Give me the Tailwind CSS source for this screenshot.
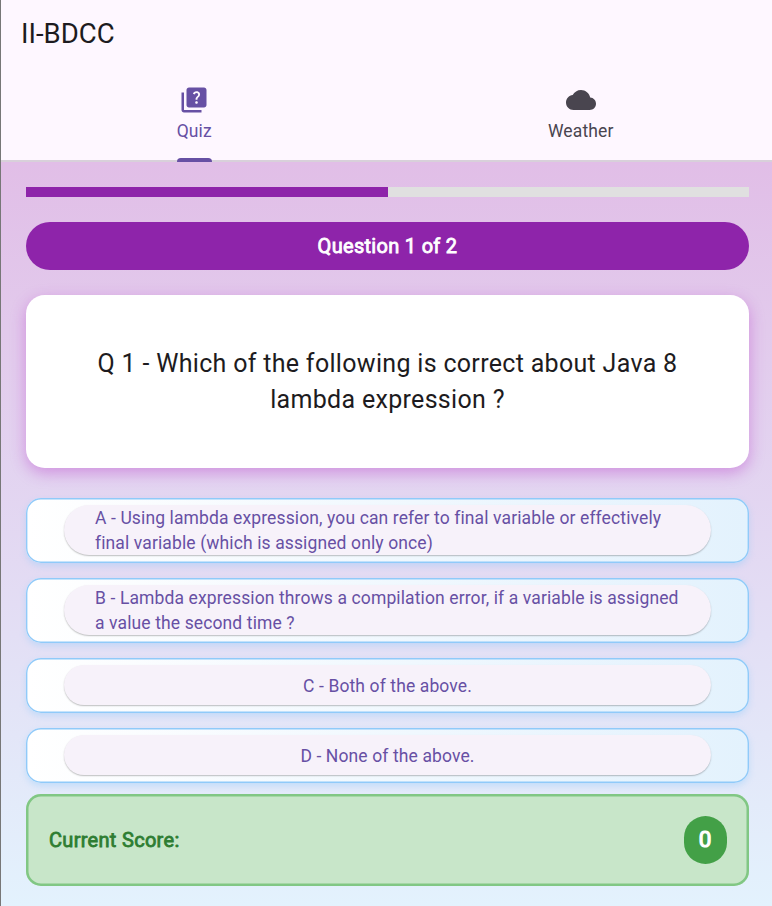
<!DOCTYPE html>
<html lang="en">
<head>
<meta charset="utf-8">
<title>II-BDCC</title>
<script src="https://cdn.jsdelivr.net/npm/@tailwindcss/browser@4"></script>
</head>
<body class="h-[906px] overflow-hidden bg-[#777777] pl-px font-[Roboto,sans-serif]">
<div class="flex h-[906px] w-[773px] flex-col">
  <header class="flex h-[162px] shrink-0 flex-col border-b-2 border-[#d8d0da] bg-[#fef7ff]">
    <h1 class="h-[68px] pl-5 text-[27.5px] leading-[67px] text-[#1d1b20]">II-BDCC</h1>
    <nav class="grid h-[94px] grid-cols-2 text-[17.5px] leading-[25px] tracking-[0.125px]">
      <a class="flex flex-col items-center pt-[18px] text-[#6750a4]">
        <svg class="size-[30px]" viewBox="0 0 24 24" fill="currentColor"><path d="M4 6H2v14c0 1.100.9 2 2 2h14v-2H4V6zm16-4H8c-1.100 0-2 .9-2 2v12c0 1.100.9 2 2 2h12c1.100 0 2-.9 2-2V4c0-1.100-.9-2-2-2zm-5.990 13c-.59 0-1.050-.47-1.050-1.050 0-.59.47-1.040 1.050-1.040.59 0 1.040.45 1.040 1.040-.01.58-.45 1.050-1.040 1.050zm2.500-6.170c-.63.930-1.230 1.210-1.560 1.810-.13.240-.18.400-.18 1.180h-1.520c0-.41-.06-1.080.26-1.650.410-.73 1.180-1.160 1.630-1.800.480-.68.210-1.940-1.140-1.940-.88 0-1.320.67-1.500 1.230l-1.370-.57C11.510 5.960 12.520 5 13.990 5c1.230 0 2.080.56 2.510 1.260.370.600.580 1.730.010 2.570z"/></svg>
        <span class="mt-[4px]">Quiz</span>
        <span class="relative z-10 mt-[14px] h-[4px] w-[35px] rounded-t-[3.75px] bg-[#6750a4]"></span>
      </a>
      <a class="flex flex-col items-center pt-[18px] text-[#49454f]">
        <svg class="size-[30px]" viewBox="0 0 24 24" fill="currentColor"><path d="M19.350 10.040C18.670 6.590 15.640 4 12 4 9.110 4 6.600 5.640 5.350 8.040 2.340 8.360 0 10.910 0 14c0 3.310 2.690 6 6 6h13c2.760 0 5-2.240 5-5 0-2.640-2.050-4.780-4.650-4.960z"/></svg>
        <span class="mt-[4px]">Weather</span>
      </a>
    </nav>
  </header>
  <main class="flex grow flex-col bg-linear-to-b from-[#e1bee7] to-[#e3f2fd] px-[25px] pt-[24.500px]">
    <div class="h-[10px] shrink-0 bg-[#e0e0e0]"><div class="h-full w-1/2 bg-[#8e24aa]"></div></div>
    <div class="mt-[25px] h-[48.750px] shrink-0 rounded-[25px] bg-[#8e24aa] text-center text-[20px] leading-[48.750px] tracking-[0.3px] text-white [-webkit-text-stroke:0.8px_white]">Question 1 of 2</div>
    <section class="mt-[25px] flex h-[172.500px] shrink-0 items-center justify-center rounded-[18.750px] bg-white px-[50px] text-center text-[25px] leading-[36px] tracking-[0.3125px] text-[#1d1b20] shadow-[0_5px_15px_#b52fc566]"><p>Q 1 - Which of the following is correct about Java 8<br>lambda expression ?</p></section>
    <section class="mt-[30px] flex shrink-0 flex-col gap-[15px] text-[17.500px] leading-[25px] tracking-[0.118px] text-[#6750a4]">
      <div class="h-[65px] rounded-[15px] bg-linear-to-r from-white to-[#e3f2fd] px-[38px] pt-[7px] shadow-[inset_0_0_0_1.400px_#90caf9,0_3px_6px_#90caf966]">
        <div class="h-[50px] rounded-full bg-[#f7f2fa] pt-px pl-[31px] shadow-[0_1px_1.500px_#00000040]">A - Using lambda expression, you can refer to final variable or effectively<br>final variable (which is assigned only once)</div>
      </div>
      <div class="h-[65px] rounded-[15px] bg-linear-to-r from-white to-[#e3f2fd] px-[38px] pt-[7px] shadow-[inset_0_0_0_1.400px_#90caf9,0_3px_6px_#90caf966]">
        <div class="h-[50px] rounded-full bg-[#f7f2fa] pt-px pl-[31px] shadow-[0_1px_1.500px_#00000040]">B - Lambda expression throws a compilation error, if a variable is assigned<br>a value the second time ?</div>
      </div>
      <div class="h-[55px] rounded-[15px] bg-linear-to-r from-white to-[#e3f2fd] px-[38px] pt-[7px] shadow-[inset_0_0_0_1.400px_#90caf9,0_3px_6px_#90caf966]">
        <div class="h-[40px] rounded-full bg-[#f7f2fa] text-center leading-[43px] shadow-[0_1px_1.500px_#00000040]">C - Both of the above.</div>
      </div>
      <div class="h-[55px] rounded-[15px] bg-linear-to-r from-white to-[#e3f2fd] px-[38px] pt-[7px] shadow-[inset_0_0_0_1.400px_#90caf9,0_3px_6px_#90caf966]">
        <div class="h-[40px] rounded-full bg-[#f7f2fa] text-center leading-[43px] shadow-[0_1px_1.500px_#00000040]">D - None of the above.</div>
      </div>
    </section>
    <footer class="relative mt-[11px] flex h-[92px] shrink-0 items-center justify-between rounded-[15px] bg-[#c8e6c9] pr-[22.500px] pl-[23px] shadow-[inset_0_0_0_2.500px_#81c784]">
      <span class="text-[20px] tracking-[0.3px] text-[#2e7d32] [-webkit-text-stroke:0.8px_#2e7d32]">Current Score:</span>
      <span class="flex h-[48px] w-[43px] items-center justify-center rounded-[25px] bg-[#43a047] text-[22.500px] text-white [-webkit-text-stroke:1.2px_white]">0</span>
    </footer>
  </main>
</div>
</body>
</html>
